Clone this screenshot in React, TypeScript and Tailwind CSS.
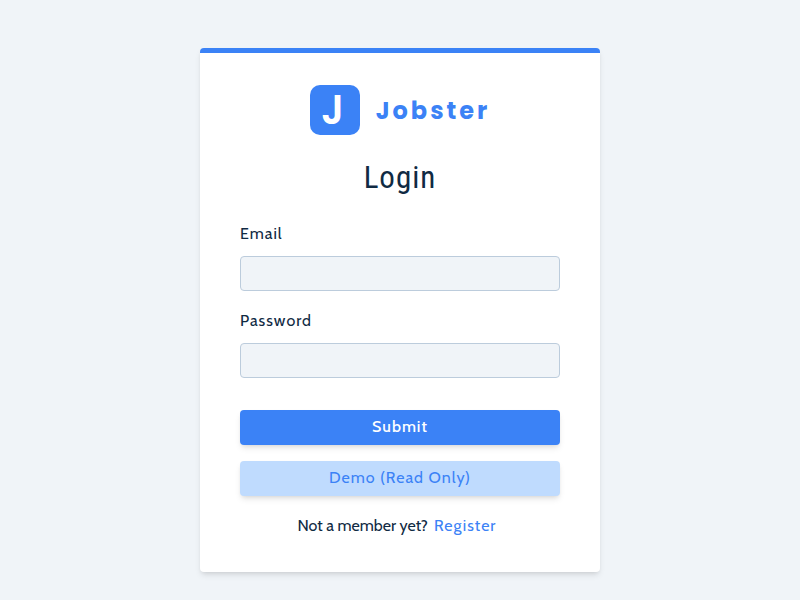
import { useState } from "react";

type FieldProps = {
  id: string;
  label: string;
  type: string;
  value: string;
  onChange: (value: string) => void;
};

function Logo() {
  return (
    <div className="flex items-center justify-center gap-4 font-['Poppins','Inter',sans-serif]">
      <span
        aria-hidden="true"
        className="flex size-[50px] items-center justify-center rounded-[10px] bg-[#3b82f6] pr-1 text-[40px] leading-none font-semibold text-white"
      >
        J
      </span>
      <span className="pt-0.5 text-[24px] leading-9 font-bold tracking-[3px] text-[#3b82f6]">Jobster</span>
    </div>
  );
}

function Field({ id, label, type, value, onChange }: FieldProps) {
  return (
    <div className="mb-4">
      <label htmlFor={id} className="mb-2 block leading-7 tracking-[1px]">
        {label}
      </label>
      <input
        id={id}
        type={type}
        value={value}
        onChange={(event) => onChange(event.target.value)}
        className="block h-[35px] w-full rounded border border-[#bcccdc] bg-[#f0f4f8] px-3"
      />
    </div>
  );
}

export default function App() {
  const [email, setEmail] = useState("");
  const [password, setPassword] = useState("");

  return (
    <main className="min-h-screen bg-[#f0f4f8] px-4 py-12 font-['Cabin','Lato',sans-serif] text-base font-normal text-[#102a43]">
      <form
        onSubmit={(event) => event.preventDefault()}
        className="mx-auto w-full max-w-[400px] rounded border-t-[5px] border-[#3b82f6] bg-white px-10 py-8 shadow-md"
      >
        <Logo />
        <h1 className="mt-6 mb-6 text-center font-['Roboto_Condensed','Liberation_Sans_Narrow','Roboto',sans-serif] text-[31px] leading-[37px] tracking-[1px]">
          Login
        </h1>
        <Field id="email" label="Email" type="email" value={email} onChange={setEmail} />
        <Field id="password" label="Password" type="password" value={password} onChange={setPassword} />
        <div className="mt-8 flex flex-col gap-4">
          <button
            type="submit"
            className="h-[35px] rounded bg-[#3b82f6] pb-0.5 font-medium tracking-[1px] text-white shadow-md"
          >
            Submit
          </button>
          <button
            type="button"
            className="h-[35px] rounded bg-[#bfdbfe] pb-0.5 tracking-[1px] text-[#3b82f6] shadow-md"
          >
            Demo (Read Only)
          </button>
        </div>
        <p className="mt-4 text-center leading-7">
          Not a member yet?
          <button type="button" className="px-1.5 tracking-[1px] text-[#3b82f6]">
            Register
          </button>
        </p>
      </form>
    </main>
  );
}
